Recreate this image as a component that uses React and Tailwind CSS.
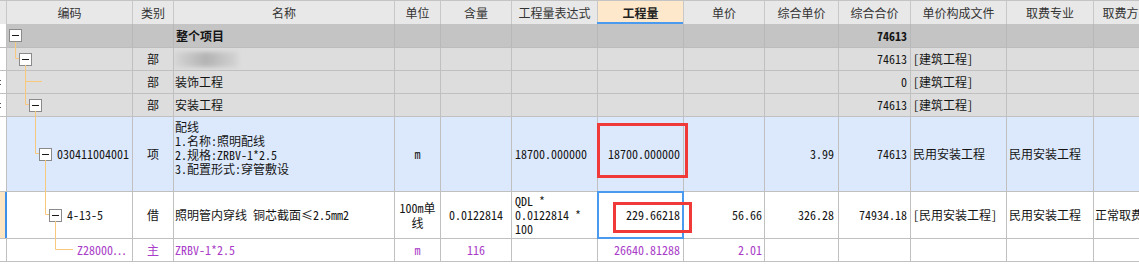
import React from 'react';

const GRID = 'grid grid-cols-[7px_126px_41px_221px_46px_71px_86px_86px_81px_74px_72px_96px_87px_66px]';

const headers = ['编码', '类别', '名称', '单位', '含量', '工程量表达式', '工程量', '单价', '综合单价', '综合合价', '单价构成文件', '取费专业', '取费方式'];

function Minus() {
  return (
    <span className="flex h-[13px] w-[13px] shrink-0 items-center justify-center border border-[#8a8a8a] bg-white">
      <span className="h-px w-[7px] bg-[#1a1a1a]" />
    </span>
  );
}

// body cell; row 1 uses a slightly darker grid line
function C({ children, className = '', dark }) {
  const line = dark ? 'border-[#b8b8b8]' : 'border-[#c0c0c0]';
  return (
    <div className={`flex min-w-0 items-center overflow-hidden whitespace-nowrap border-r ${line} ${className}`}>
      {children}
    </div>
  );
}

function Head({ dots }) {
  return (
    <div className="flex flex-col justify-center gap-[3px] border-r border-[#c0c0c0] bg-white">
      {dots && (
        <>
          <span className="h-px w-px bg-[#555]" />
          <span className="h-px w-px bg-[#555]" />
        </>
      )}
    </div>
  );
}

export default function App() {
  return (
    <div className="relative h-[274px] w-[1139px] overflow-hidden bg-white text-[12px] text-[#151515] font-['Noto_Sans_Mono_CJK_SC','Noto_Sans_CJK_SC',sans-serif]">
      {/* header */}
      <div className={`${GRID} h-[24px] border-t border-[#c4c4c4] bg-[#e8e8e8] text-[#333] font-['Noto_Sans_CJK_SC',sans-serif]`}>
        <div className="border-r border-[#c8c8c8]" />
        {headers.map((h) =>
          h === '工程量' ? (
            <div key={h} className="relative flex items-center justify-center whitespace-nowrap border-r border-[#c8c8c8] bg-[#fde8cb] font-bold text-[#222]">
              {h}
              <span className="absolute -left-px right-0 bottom-0 h-[2px] bg-[#4a9af0]" />
            </div>
          ) : (
            <div key={h} className="flex items-center justify-center whitespace-nowrap border-r border-[#c8c8c8]">
              {h}
            </div>
          )
        )}
      </div>

      {/* 整个项目 */}
      <div className={`${GRID} h-[24px] border-b border-[#bcbcbc] bg-[#c4c4c4]`}>
        <Head />
        <C dark className="pl-[2px]"><Minus /></C>
        <C dark />
        <C dark className="pl-[2px] font-bold">整个项目</C>
        <C dark /><C dark /><C dark /><C dark /><C dark /><C dark />
        <C dark className="justify-end pr-[3px] font-bold">74613</C>
        <C dark /><C dark /><C dark />
      </div>

      {/* 部 */}
      <div className={`${GRID} h-[23px] border-b border-[#c0c0c0] bg-[#dddddd]`}>
        <Head />
        <C className="pl-[12px]"><Minus /></C>
        <C className="justify-center">部</C>
        <C>
          <span className="h-[15px] w-[64px] bg-linear-to-r from-[#d6d6d6] via-[#b3b3b3] to-[#d4d4d4] blur-[2px]" />
        </C>
        <C /><C /><C /><C /><C /><C />
        <C className="justify-end pr-[3px]">74613</C>
        <C className="pl-[2px]">[建筑工程]</C>
        <C /><C />
      </div>

      {/* 装饰工程 */}
      <div className={`${GRID} h-[23px] border-b border-[#c0c0c0] bg-[#dddddd]`}>
        <Head dots />
        <C />
        <C className="justify-center">部</C>
        <C className="pl-[1px]">装饰工程</C>
        <C /><C /><C /><C /><C /><C />
        <C className="justify-end pr-[3px]">0</C>
        <C className="pl-[2px]">[建筑工程]</C>
        <C /><C />
      </div>

      {/* 安装工程 */}
      <div className={`${GRID} h-[23px] border-b border-[#c0c0c0] bg-[#dddddd]`}>
        <Head dots />
        <C className="pl-[22px]"><Minus /></C>
        <C className="justify-center">部</C>
        <C className="pl-[1px]">安装工程</C>
        <C /><C /><C /><C /><C /><C />
        <C className="justify-end pr-[3px]">74613</C>
        <C className="pl-[2px]">[建筑工程]</C>
        <C /><C />
      </div>

      {/* 配线 */}
      <div className={`${GRID} h-[75px] border-b border-[#c0c0c0] bg-[#dce9fc]`}>
        <Head />
        <C className="pl-[32px]">
          <Minus />
          <span className="ml-[5px]">030411004001</span>
        </C>
        <C className="justify-center">项</C>
        <C className="flex-col !items-start pl-[1px] pt-[3px] leading-[14px]">
          <span>配线</span>
          <span>1.名称:照明配线</span>
          <span>2.规格:ZRBV-1*2.5</span>
          <span>3.配置形式:穿管敷设</span>
        </C>
        <C className="justify-center">m</C>
        <C />
        <C className="pl-[3px]">18700.000000</C>
        <C className="justify-end pr-[3px]">18700.000000</C>
        <C />
        <C className="justify-end pr-[4px]">3.99</C>
        <C className="justify-end pr-[3px]">74613</C>
        <C className="pl-[2px]">民用安装工程</C>
        <C className="pl-[2px]">民用安装工程</C>
        <C />
      </div>

      {/* 借 */}
      <div className={`${GRID} h-[47px] border-b border-[#c0c0c0] bg-white`}>
        <div className="border-r-2 border-[#3f8ee8] bg-[#fde6c4]" />
        <C className="pl-[42px]">
          <Minus />
          <span className="ml-[5px]">4-13-5</span>
        </C>
        <C className="justify-center">借</C>
        <C className="pl-[1px]">照明管内穿线 铜芯截面≤2.5mm2</C>
        <C className="flex-col justify-center text-center leading-[15px]">
          <span>100m单</span>
          <span>线</span>
        </C>
        <C className="justify-center">0.0122814</C>
        <C className="flex-col !items-start justify-center pl-[3px] leading-[14px]">
          <span>QDL *</span>
          <span>0.0122814 *</span>
          <span>100</span>
        </C>
        <div className="relative flex items-center justify-end border-r border-[#c0c0c0] pr-[3px]">
          229.66218
          <span className="absolute -inset-px border-2 border-[#4a9af0]" />
        </div>
        <C className="justify-end pr-[2px]">56.66</C>
        <C className="justify-end pr-[4px]">326.28</C>
        <C className="justify-end pr-[3px]">74934.18</C>
        <C className="pl-[2px]">[民用安装工程]</C>
        <C className="pl-[2px]">民用安装工程</C>
        <C className="pl-[1px]">正常取费</C>
      </div>

      {/* 主 */}
      <div className={`${GRID} h-[23px] border-b border-[#c0c0c0] bg-white text-[#a93cc8]`}>
        <Head />
        <C className="pl-[70px]">Z28000⋯</C>
        <C className="justify-center">主</C>
        <C className="pl-[1px]">ZRBV-1*2.5</C>
        <C className="justify-center">m</C>
        <C className="justify-center">116</C>
        <C />
        <C className="justify-end pr-[3px]">26640.81288</C>
        <C className="justify-end pr-[2px]">2.01</C>
        <C /><C /><C /><C /><C />
      </div>

      {/* tree connector lines */}
      <svg className="pointer-events-none absolute left-0 top-0" width="140" height="274">
        <g fill="none" stroke="#f8c87c" strokeWidth="1">
          <path d="M15.5 42 V58.5 H19" />
          <path d="M25.5 65 V104.5 H29" />
          <path d="M25.5 81.5 H42" />
          <path d="M35.5 111 V153.5 H39" />
          <path d="M45.5 160 V214.5 H49" />
          <path d="M55.5 221 V249.5 H73" />
        </g>
      </svg>

      {/* red annotation boxes */}
      <div className="pointer-events-none absolute left-[597px] top-[123px] h-[55px] w-[91px] border-[3px] border-[#f03a3a]" />
      <div className="pointer-events-none absolute left-[613px] top-[202px] h-[31px] w-[79px] border-[3px] border-[#f03a3a]" />
    </div>
  );
}
